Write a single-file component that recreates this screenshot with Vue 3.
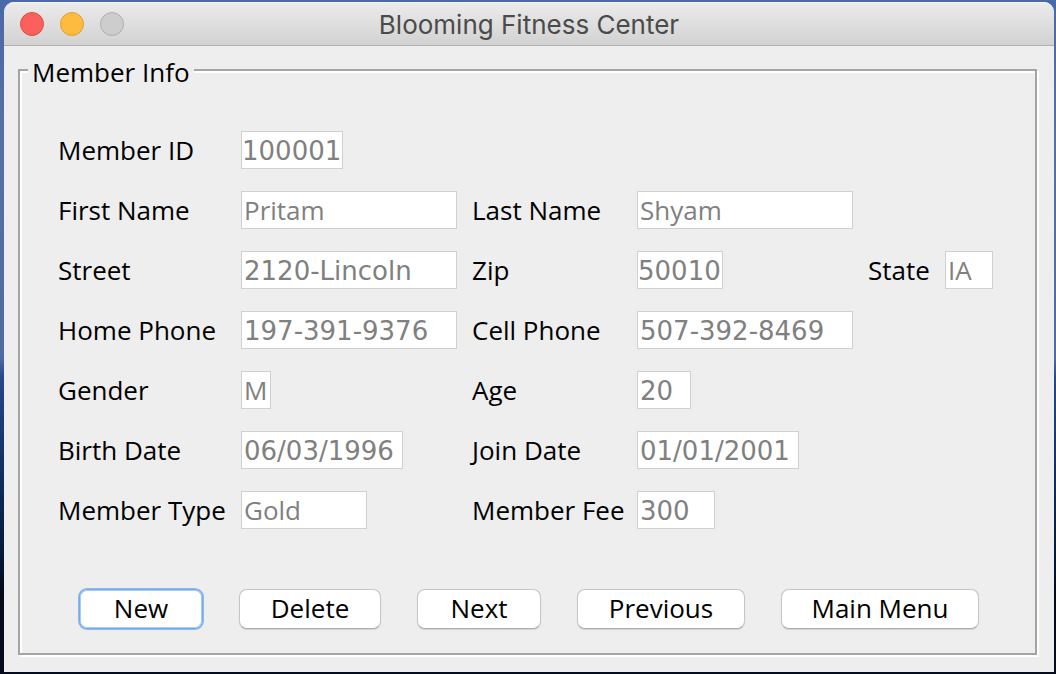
<script setup>
import { reactive } from 'vue'

const fields = reactive([
  { id: 'member-id', label: 'Member ID', value: '100001', size: 'w-id', col: 'first', numeric: true },
  { id: 'first-name', label: 'First Name', value: 'Pritam', size: 'w-full', col: 'first' },
  { id: 'last-name', label: 'Last Name', value: 'Shyam', size: 'w-full', col: 'second' },
  { id: 'street', label: 'Street', value: '2120-Lincoln', size: 'w-full', col: 'first', numeric: true },
  { id: 'zip', label: 'Zip', value: '50010', size: 'w-zip', col: 'second', numeric: true },
  { id: 'state', label: 'State', value: 'IA', size: 'w-state', col: 'third' },
  { id: 'home-phone', label: 'Home Phone', value: '197-391-9376', size: 'w-full', col: 'first', numeric: true },
  { id: 'cell-phone', label: 'Cell Phone', value: '507-392-8469', size: 'w-full', col: 'second', numeric: true },
  { id: 'gender', label: 'Gender', value: 'M', size: 'w-gender', col: 'first' },
  { id: 'age', label: 'Age', value: '20', size: 'w-age', col: 'second', numeric: true },
  { id: 'birth-date', label: 'Birth Date', value: '06/03/1996', size: 'w-date', col: 'first', numeric: true },
  { id: 'join-date', label: 'Join Date', value: '01/01/2001', size: 'w-date', col: 'second', numeric: true },
  { id: 'member-type', label: 'Member Type', value: 'Gold', size: 'w-type', col: 'first' },
  { id: 'member-fee', label: 'Member Fee', value: '300', size: 'w-fee', col: 'second', numeric: true },
])

const actions = [
  { label: 'New', size: 'short', selected: true },
  { label: 'Delete', size: 'medium' },
  { label: 'Next', size: 'short' },
  { label: 'Previous', size: 'long' },
  { label: 'Main Menu', size: 'longest' },
]
</script>

<template>
  <div class="desktop">
    <main class="window">
      <header class="titlebar">
        <div class="lights">
          <button type="button" class="light close" aria-label="Close"></button>
          <button type="button" class="light minimize" aria-label="Minimize"></button>
          <button type="button" class="light zoom" aria-label="Zoom" disabled></button>
        </div>
        <h1>Blooming Fitness Center</h1>
      </header>

      <form class="body" @submit.prevent>
        <fieldset>
          <legend>Member Info</legend>
          <div class="grid">
            <template v-for="f in fields" :key="f.id">
              <label :for="f.id" :class="f.col">{{ f.label }}</label>
              <input
                :id="f.id"
                v-model="f.value"
                type="text"
                disabled
                :class="[f.size, { numeric: f.numeric }]"
              />
            </template>
          </div>
          <div class="actions">
            <button
              v-for="a in actions"
              :key="a.label"
              type="button"
              class="action"
              :class="[a.size, { selected: a.selected }]"
            >{{ a.label }}</button>
          </div>
        </fieldset>
      </form>
    </main>
  </div>
</template>

<style>
body {
  margin: 0;
}
</style>

<style scoped>
* {
  box-sizing: border-box;
}

.desktop {
  display: flex;
  min-height: 100vh;
  padding: 2px 2px 2px 4px;
  background: linear-gradient(#4a69a8 0%, #5470a4 20%, #4f6ca2 53%, #27488a 56%, #0c2c5c 72%, #061a3c 82%, #040a18 88%, #050c1e 100%);
  font-family: "Lucida Grande", "Open Sans", sans-serif;
  font-size: 26px;
  color: #000;
}

.window {
  flex: 1;
  display: flex;
  flex-direction: column;
  min-width: 0;
  overflow: hidden;
  border-radius: 10px 10px 0 0;
  background: #eee;
}

.titlebar {
  display: grid;
  grid-template-columns: 1fr auto 1fr;
  align-items: center;
  height: 44px;
  padding: 0 16px;
  border-top: 1px solid #f6f6f6;
  border-bottom: 1px solid #b0b0b0;
  background: linear-gradient(#ebebeb, #d2d2d2);
}

.lights {
  display: flex;
  gap: 16px;
}

.light {
  width: 24px;
  height: 24px;
  padding: 0;
  border: 1px solid;
  border-radius: 50%;
}

.close {
  border-color: #df4a46;
  background: #fc605c;
}

.minimize {
  border-color: #de9f34;
  background: #fdbc40;
}

.zoom {
  border-color: #aeaeae;
  background: #cdcdcd;
}

h1 {
  margin: 0;
  padding-top: 2px;
  font-family: Inter, sans-serif;
  font-size: 26px;
  font-weight: 400;
  line-height: 32px;
  color: #4b4b4b;
}

.body {
  flex: 1;
  display: flex;
  padding: 6px 17px 17px 14px;
}

fieldset {
  flex: 1;
  min-width: 0;
  margin: 0;
  padding: 43px 42px 24px 38px;
  border: 2px solid #a4a4a4;
  box-shadow: inset 2px 2px 0 #fff, 2px 2px 0 #fff;
}

legend {
  margin-left: -30px;
  padding: 4px 4px 0;
  line-height: 32px;
  background: #eee;
}

.grid {
  display: grid;
  grid-template-columns: 183fr 231fr 165fr 231fr 77fr 48fr;
  grid-auto-rows: 38px;
  row-gap: 22px;
  align-items: center;
}

label {
  line-height: 38px;
  white-space: nowrap;
}

.first {
  grid-column: 1;
}

.second {
  grid-column: 3;
}

.third {
  grid-column: 5;
}

input {
  height: 38px;
  padding: 0 2px;
  border: 1px solid #d0d0d0;
  border-radius: 0;
  background: #fff;
  font: inherit;
  color: #808080;
}

.numeric {
  padding-top: 2px;
  font-family: "Lucida Grande", "DejaVu Sans", sans-serif;
}

.w-full {
  width: 216px;
}

.w-date {
  width: 162px;
}

.w-type {
  width: 126px;
}

.w-id {
  width: 102px;
}

.w-zip {
  width: 86px;
}

.w-id,
.w-zip {
  padding-right: 0;
  padding-left: 0;
}

.w-fee {
  width: 78px;
}

.w-age {
  width: 54px;
}

.w-state {
  width: 48px;
}

.w-gender {
  width: 30px;
}

.actions {
  display: flex;
  gap: 36px;
  margin: 60px 0 0 21px;
}

.action {
  height: 40px;
  padding: 0 0 2px;
  border: 1px solid #c6c6c6;
  border-bottom-color: #acacac;
  border-radius: 8px;
  background: #fff;
  box-shadow: 0 1px 1px rgba(0, 0, 0, 0.12);
  font: inherit;
  line-height: 36px;
  color: #000;
}

.selected {
  border-color: #78aae8;
  box-shadow: 0 0 0 1px #8ab8f0, inset 0 0 0 1px #a9cbf5;
}

.short {
  width: 124px;
}

.medium {
  width: 142px;
}

.long {
  width: 168px;
}

.longest {
  width: 198px;
}
</style>
